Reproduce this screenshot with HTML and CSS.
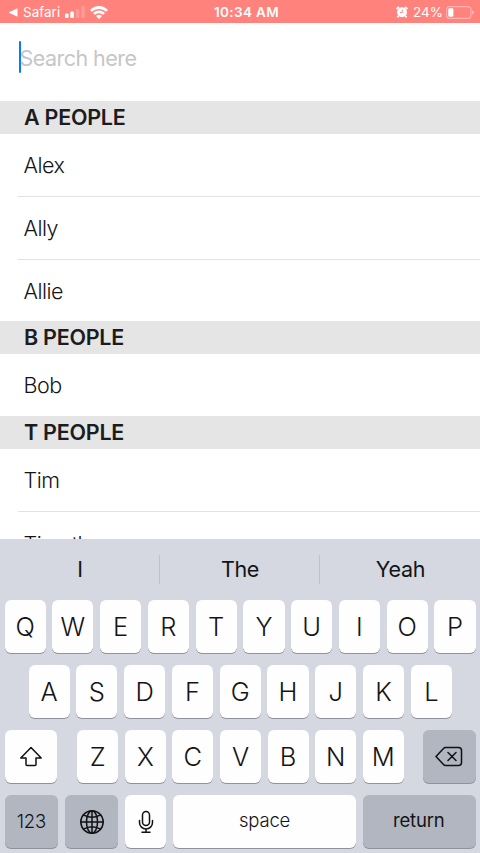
FILE: index.html
```html
<!DOCTYPE html>
<html lang="en">
<head>
<meta charset="utf-8">
<meta name="viewport" content="width=device-width">
<title>People</title>
<link rel="stylesheet" href="styles.css">
</head>
<body>
<main class="phone">
  <header class="status">
    <div class="status-left">
      <svg class="back" viewBox="0 0 9 9"><path d="M0 4.5 9 .3v8.4z"/></svg>
      <span class="carrier">Safari</span>
      <svg class="signal" viewBox="0 0 20 12"><rect x="0" y="7.500" width="3.600" height="4.500" rx="1"/><rect x="5.300" y="5.500" width="3.600" height="6.500" rx="1"/><g opacity=".2"><rect x="10.800" y="3" width="3.600" height="9" rx="1"/><rect x="16.200" y="0" width="3.600" height="12" rx="1"/></g></svg>
      <svg class="wifi" viewBox="0 0 18 13"><path d="M0 4C5-1.300 13-1.300 18 4l-1.800 1.800C12.200 1.900 5.800 1.900 1.800 5.800zM3 7c3.400-3.300 8.600-3.300 12 0l-1.800 1.800c-2.400-2.200-6-2.200-8.400 0zM6 10c1.700-1.600 4.300-1.600 6 0l-3 3z"/></svg>
    </div>
    <span class="clock">10:34 AM</span>
    <div class="status-right">
      <svg class="alarm" viewBox="0 0 12 12"><circle cx="6" cy="6.300" r="5"/><path d="M.6 3 3 .8M11.400 3 9 .8M2.600 10 1.400 11.300M9.400 10l1.200 1.300" stroke="#fff" stroke-width="1.800"/><path d="M6.300 3.500v3H4" fill="none" stroke="#ff827c" stroke-width=".9"/></svg>
      <span class="percent">24%</span>
      <svg class="battery" viewBox="0 0 28 13"><rect x=".6" y=".6" width="24.300" height="11.800" rx="3" fill="none" stroke="#fff" stroke-opacity=".4" stroke-width="1.100"/><rect x="2.200" y="2.200" width="5.200" height="8.600" rx="1.300"/><path d="M26.200 4.300q3 2.200 0 4.400z" opacity=".5"/></svg>
    </div>
  </header>
  <div class="search"><span class="caret"></span><span class="placeholder">Search here</span></div>
  <section class="list">
    <h2>A PEOPLE</h2>
    <div class="row">Alex</div>
    <div class="row">Ally</div>
    <div class="row">Allie</div>
    <h2>B PEOPLE</h2>
    <div class="row">Bob</div>
    <h2>T PEOPLE</h2>
    <div class="row">Tim</div>
    <div class="row">Timothy</div>
  </section>
  <section class="keyboard">
    <div class="suggestions"><span>I</span><span>The</span><span>Yeah</span></div>
    <div class="keys">
      <div class="key-row"><b>Q</b><b>W</b><b>E</b><b>R</b><b>T</b><b>Y</b><b>U</b><b>I</b><b>O</b><b>P</b></div>
      <div class="key-row middle"><b>A</b><b>S</b><b>D</b><b>F</b><b>G</b><b>H</b><b>J</b><b>K</b><b>L</b></div>
      <div class="key-row third">
        <b class="shift"><svg width="24" height="22" viewBox="0 0 24 22"><path d="M12 1.500 1.800 12H7v6.500q0 1 1 1h8q1 0 1-1V12h5.200z"/></svg></b>
        <div class="letters"><b>Z</b><b>X</b><b>C</b><b>V</b><b>B</b><b>N</b><b>M</b></div>
        <b class="delete gray"><svg width="28" height="22" viewBox="0 0 28 22"><path d="M10.500 1.500h13q3 0 3 3v12q0 3-3 3h-13q-1.200 0-2-1L1 10.500l7.500-8q.8-1 2-1zM13 6.500l8 8m0-8-8 8"/></svg></b>
      </div>
      <div class="key-row bottom">
        <b class="numbers gray">123</b>
        <b class="globe gray"><svg width="26" height="26" viewBox="0 0 26 26"><circle cx="13" cy="13" r="11.200"/><ellipse cx="13" cy="13" rx="5.500" ry="11.200"/><path d="M13 1.800v22.400M1.800 13h22.400M4.500 5.800q8.500 5 17 0M4.500 20.200q8.500-5 17 0"/></svg></b>
        <b class="mic"><svg width="16" height="24" viewBox="0 0 16 24"><rect x="4.500" y="1.500" width="7" height="14" rx="3.500"/><path d="M1.500 10.500v2a6.500 6.500 0 0 0 13 0v-2M8 19v3M4 22.300h8"/></svg></b>
        <b class="space">space</b>
        <b class="return gray">return</b>
      </div>
    </div>
  </section>
</main>
</body>
</html>
```
FILE: styles.css
```css
* { box-sizing: border-box; }
body { margin: 0; background: #fff; color: #141416; font-family: Inter, "Liberation Sans", sans-serif; }
.phone { width: 480px; height: 853px; overflow: hidden; display: flex; flex-direction: column; }
.status { height: 23px; flex: none; display: grid; grid-template-columns: 206px auto 1fr; align-items: center; padding: 1px 6px 0 8px; background: #ff827c; color: #fff; font-size: 13.5px; line-height: 22px; }
.status svg { fill: #fff; display: block; }
.status-left, .status-right { display: flex; align-items: center; }
.status-right { justify-content: flex-end; }
.back { width: 10px; height: 9px; }
.carrier { margin-left: 5px; }
.signal { width: 20px; height: 12px; margin-left: 5px; }
.wifi { width: 18px; height: 13px; margin-left: 5px; }
.clock { font-weight: 600; font-size: 13.5px; letter-spacing: .35px; }
.alarm { width: 12px; height: 12px; margin-right: 5px; }
.percent { margin-right: 3px; }
.battery { width: 28px; height: 13px; }
.search { height: 78px; flex: none; padding: 18px 0 0 18px; display: flex; align-items: flex-start; }
.caret { width: 2px; height: 32px; margin-left: .5px; border-radius: 1px; background: #0878ff; }
.placeholder { color: #c6c6c8; font-size: 21.5px; line-height: 34px; letter-spacing: -.55px; margin-left: -1px; }
.list { height: 438px; flex: none; overflow: hidden; }
h2 { height: 32.5px; margin: 0; padding-left: 24px; background: #e5e5e5; color: #1c1c1e; font-size: 21.5px; line-height: 33px; font-weight: 600; letter-spacing: -.25px; }
.row { height: 62.5px; margin-left: 18px; padding-left: 5.5px; font-size: 21.5px; line-height: 63px; letter-spacing: -.5px; font-weight: 300; }
.row + .row { border-top: 1px solid #e2e2e4; line-height: 62px; }
.row:last-child { line-height: 64px; }
.keyboard { height: 314px; flex: none; background: #d5d8e0; }
.suggestions { height: 61px; display: grid; grid-template-columns: 159px 160px 1fr; align-items: center; text-align: center; font-size: 21.5px; letter-spacing: -.3px; }
.suggestions span { height: 29px; line-height: 29px; padding-left: 1px; }
.suggestions span + span { border-left: 1px solid #bec1c7; }
.keys { display: flex; flex-direction: column; gap: 12.5px; padding: 0 4.5px; }
.key-row { display: flex; gap: 6.6px; height: 52.5px; }
.key-row b { flex: 1; min-width: 0; display: flex; align-items: center; justify-content: center; background: #fefefe; border-radius: 6px; box-shadow: 0 1px 0 #8f9299; font-weight: 300; font-size: 25.5px; padding-top: 1px; }
.key-row .gray { background: #b1b6c1; }
.middle { padding: 0 23.5px 0 24px; }
.third { justify-content: space-between; }
.key-row .shift, .key-row .delete { flex: 0 0 52.5px; }
.letters { display: flex; gap: 6.6px; width: 326.5px; margin-left: 1px; }
.key-row svg { fill: none; stroke: #111; stroke-width: 1.5; stroke-linejoin: round; stroke-linecap: round; }
.key-row .shift svg { margin: 1px 0 0 1px; }
.key-row .numbers, .key-row .globe { flex: 0 0 53.7px; }
.key-row .mic { flex: 0 0 41px; }
.key-row .return { flex: 0 0 112.5px; }
.key-row .numbers, .key-row .space, .key-row .return { font-size: 18.5px; font-weight: 400; padding: 0 0 3px; letter-spacing: -.2px; }
.key-row .space { font-weight: 300; }
.key-row .return { padding-right: 1px; }
.key-row .numbers { padding: 0; font-weight: 300; }
```
